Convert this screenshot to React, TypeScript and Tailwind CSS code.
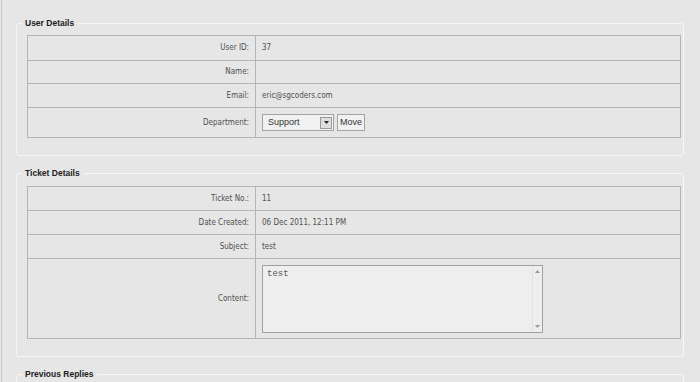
const cell = 'border border-[#b5b5b5] h-[24px] p-0';
const label = `${cell} w-[228px] text-right pr-[6px]`;
const value = `${cell} pl-[6px]`;

function Row({ name, children, h }: { name: string; children?: React.ReactNode; h?: string }) {
  return (
    <tr className={h}>
      <td className={label}>{name}</td>
      <td className={value}>{children}</td>
    </tr>
  );
}

function Box({ title, mt, pt, children }: { title: string; mt: string; pt: string; children?: React.ReactNode }) {
  return (
    <fieldset
      className={`${mt} ${pt} ml-[14px] mr-[16px] border border-[#f6f6f6] rounded-[3px] pl-[10px] pr-[2px] pb-[17px] min-w-0`}
    >
      <legend className="-ml-[5px] px-[3px] text-[8.5px] leading-[12px] font-bold text-[#222] font-['Liberation_Sans',Arial,sans-serif]">
        {title}
      </legend>
      {children}
    </fieldset>
  );
}

export default function App() {
  return (
    <div className="w-[700px] h-[382px] overflow-hidden bg-[#e6e6e6] font-['DejaVu_Sans_Condensed','DejaVu_Sans',Verdana,sans-serif] text-[8px] text-[#505050]">
      <div className="ml-[1px] h-full border-l border-[#c9c9c9] pt-[17px]">
        <Box title="User Details" mt="mt-0" pt="pt-[6px]">
          <table className="w-full border-collapse border border-[#b5b5b5]">
            <tbody>
              <Row name="User ID:" h="[&>td]:h-[25px]">37</Row>
              <Row name="Name:" h="[&>td]:h-[23px]" />
              <Row name="Email:">eric@sgcoders.com</Row>
              <Row name="Department:" h="[&>td]:h-[30px]">
                <div className="flex items-center gap-[3px]">
                  <div className="flex items-center justify-between w-[72px] h-[17px] border border-[#a3a3a3] bg-[#f1f1f1] pl-[5px] pr-[1px]">
                    <span className="font-['Liberation_Sans',Arial,sans-serif] text-[9px] text-[#333]">Support</span>
                    <span className="flex items-center justify-center w-[12px] h-[12px] border border-[#9a9a9a] bg-[#dedede]">
                      <svg width="5" height="3" viewBox="0 0 5 3">
                        <path d="M0 0h5L2.5 3z" fill="#222" />
                      </svg>
                    </span>
                  </div>
                  <div className="flex items-center justify-center w-[28px] h-[17px] border border-[#a3a3a3] bg-[#f1f1f1] font-['Liberation_Sans',Arial,sans-serif] text-[9px] text-[#333]">
                    Move
                  </div>
                </div>
              </Row>
            </tbody>
          </table>
        </Box>

        <Box title="Ticket Details" mt="mt-[11px]" pt="pt-[7px]">
          <table className="w-full border-collapse border border-[#b5b5b5]">
            <tbody>
              <Row name="Ticket No.:">11</Row>
              <Row name="Date Created:">06 Dec 2011, 12:11 PM</Row>
              <Row name="Subject:">test</Row>
              <Row name="Content:" h="[&>td]:h-[80px]">
                <div className="flex w-[281px] h-[68px] border border-[#a0a0a0] bg-[#eeeeee]">
                  <div className="flex-1 px-[4px] pt-[2px] font-['Liberation_Mono','Courier_New',monospace] text-[9px] text-[#555]">
                    test
                  </div>
                  <div className="flex flex-col justify-between items-center w-[10px] border-l border-[#e2e2e2] py-[4px]">
                    <svg width="5" height="3" viewBox="0 0 5 3">
                      <path d="M0 3h5L2.5 0z" fill="#999" />
                    </svg>
                    <svg width="5" height="3" viewBox="0 0 5 3">
                      <path d="M0 0h5L2.5 3z" fill="#999" />
                    </svg>
                  </div>
                </div>
              </Row>
            </tbody>
          </table>
        </Box>

        <Box title="Previous Replies" mt="mt-[11px]" pt="pt-[6px]" />
      </div>
    </div>
  );
}
